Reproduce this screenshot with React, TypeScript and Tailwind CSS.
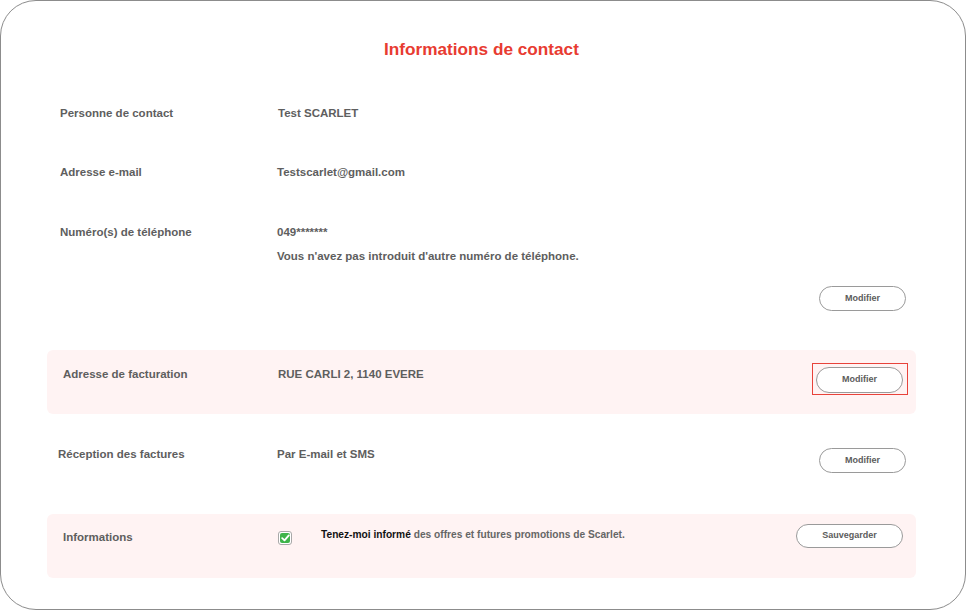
import React from "react";

const font = { fontFamily: '"Liberation Sans", Arial, sans-serif' };

function Btn({ children, w = "w-[87px]", h = "h-[25px]" }: { children: React.ReactNode; w?: string; h?: string }) {
  return (
    <button
      className={`${w} ${h} rounded-full border border-[#9a9a9a] bg-white text-[9px] font-bold text-[#5c5c5c] flex items-center justify-center`}
    >
      {children}
    </button>
  );
}

export default function App() {
  return (
    <div className="w-[967px] h-[611px] bg-white" style={font}>
      <div className="w-[966px] h-[610px] rounded-[36px] border border-[#8c8c8c] pt-[38px] pl-[46px] pr-[49px] flex flex-col">
        <h1 className="text-center text-[17.2px] leading-[20px] font-bold text-[#e83b31]">Informations de contact</h1>

        {/* Personne de contact */}
        <div className="mt-[46px] flex text-[11.5px] leading-[16px] font-bold text-[#5e5e5e]">
          <div className="w-[231px] pl-[13px]">Personne de contact</div>
          <div>Test SCARLET</div>
        </div>

        {/* Adresse e-mail */}
        <div className="mt-[43px] flex text-[11.5px] leading-[16px] font-bold text-[#5e5e5e]">
          <div className="w-[230px] pl-[13px]">Adresse e-mail</div>
          <div>Testscarlet@gmail.com</div>
        </div>

        {/* Téléphone */}
        <div className="mt-[44px] flex text-[11.5px] leading-[16px] font-bold text-[#5e5e5e]">
          <div className="w-[230px] pl-[13px]">Numéro(s) de téléphone</div>
          <div className="flex flex-col gap-[8px]">
            <div>049*******</div>
            <div>Vous n'avez pas introduit d'autre numéro de téléphone.</div>
          </div>
        </div>

        <div className="mt-[22px] flex justify-end pr-[10px]">
          <Btn>Modifier</Btn>
        </div>

        {/* Adresse de facturation */}
        <div className="mt-[39px] h-[64px] rounded-[6px] bg-[#fff3f3] flex items-start">
          <div className="pt-[16px] flex flex-1 text-[11.5px] leading-[16px] font-bold text-[#5e5e5e]">
            <div className="w-[231px] pl-[16px]">Adresse de facturation</div>
            <div>RUE CARLI 2, 1140 EVERE</div>
          </div>
          <div className="mt-[13px] mr-[8px] border border-[#e8423a] pt-[3px] pb-[1px] pl-[3px] pr-[4px]">
            <Btn h="h-[26px]">Modifier</Btn>
          </div>
        </div>

        {/* Réception des factures */}
        <div className="mt-[32px] flex items-start">
          <div className="flex flex-1 text-[11.5px] leading-[16px] font-bold text-[#5e5e5e]">
            <div className="w-[230px] pl-[11px]">Réception des factures</div>
            <div>Par E-mail et SMS</div>
          </div>
          <div className="mt-[2px] mr-[10px]">
            <Btn>Modifier</Btn>
          </div>
        </div>

        {/* Informations */}
        <div className="mt-[41px] h-[64px] rounded-[6px] bg-[#fff3f3] flex items-start">
          <div className="pt-[15px] flex flex-1 items-start text-[11.5px] leading-[16px] font-bold text-[#5e5e5e]">
            <div className="w-[231px] pl-[16px]">Informations</div>
            <div className="mt-[2px] w-[14px] h-[14px] rounded-[3px] border border-[#a8a8a8] bg-white p-[1px]">
              <div className="w-full h-full rounded-[2px] bg-[#3fb44a] flex items-center justify-center">
                <svg width="9" height="8" viewBox="0 0 9 8" fill="none">
                  <path d="M1.2 4.2 L3.5 6.3 L7.8 1.4" stroke="white" strokeWidth="1.8" strokeLinecap="round" strokeLinejoin="round" />
                </svg>
              </div>
            </div>
            <div className="ml-[29px] -mt-[2px] text-[10.2px]">
              <span className="text-[#111]">Tenez-moi informé</span>{" "}
              <span className="text-[#666] font-semibold">des offres et futures promotions de Scarlet.</span>
            </div>
          </div>
          <div className="mt-[10px] mr-[13px]">
            <Btn w="w-[107px]" h="h-[24px]">Sauvegarder</Btn>
          </div>
        </div>
      </div>
    </div>
  );
}
